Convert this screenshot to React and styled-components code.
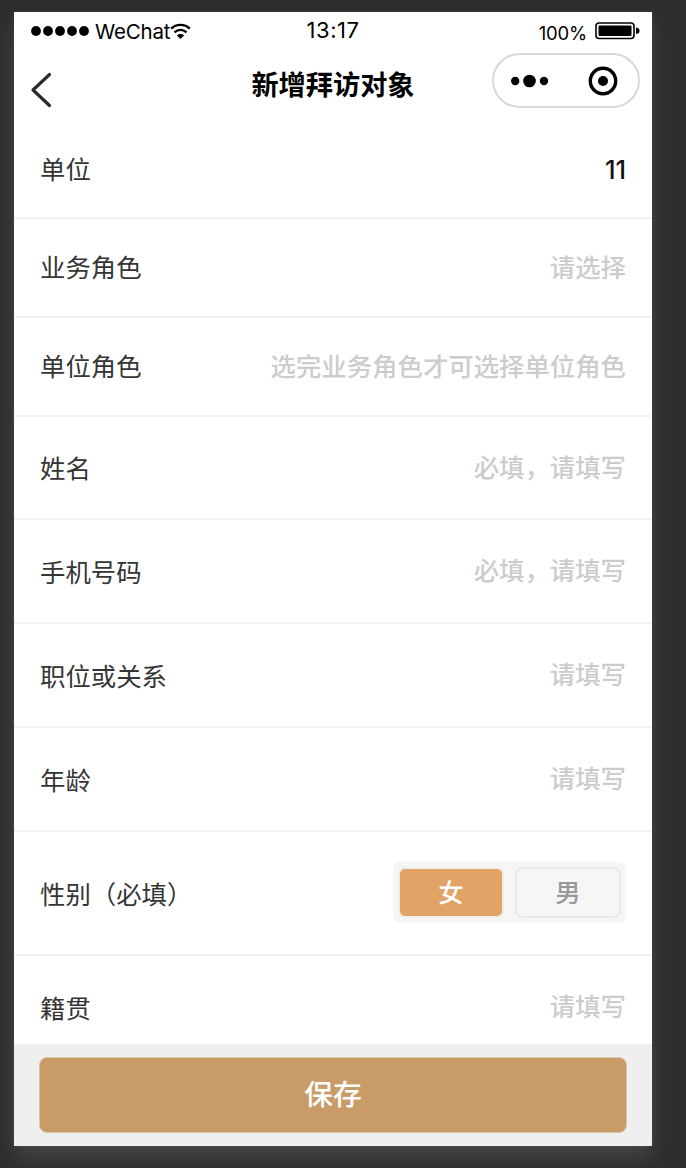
import React, { useState } from "react";
import styled, { createGlobalStyle } from "styled-components";

const GlobalStyle = createGlobalStyle`
  * {
    box-sizing: border-box;
  }
  body {
    margin: 0;
    background: #2e2e2e;
    font-family: "Noto Sans CJK SC", sans-serif;
  }
`;

const Page = styled.div`
  height: 1168px;
  padding: 12px 34px 22px 14px;
  overflow: hidden;
`;

const Phone = styled.div`
  display: flex;
  flex-direction: column;
  height: 1134px;
  background: #fff;
  box-shadow: 0 0 1px #666, 0 12px 20px -2px rgba(255, 255, 255, 0.13);
`;

const StatusBar = styled.div`
  display: grid;
  grid-template-columns: 1fr auto 1fr;
  align-items: center;
  height: 38px;
  padding: 0 12px 0 17px;
  font-family: Inter, "Liberation Sans", sans-serif;
  color: #000;
`;

const Carrier = styled.div`
  display: flex;
  align-items: center;
  font-size: 20.5px;
  letter-spacing: -0.2px;
`;

const Signal = styled.svg`
  margin-right: 5px;
`;

const Clock = styled.div`
  margin-right: 5px;
  padding-bottom: 2px;
  font-size: 22px;
  letter-spacing: 0.5px;
`;

const Battery = styled.div`
  display: flex;
  align-items: center;
  justify-content: flex-end;
  gap: 8px;
  font-size: 18.5px;
`;

const Percent = styled.span`
  padding-top: 3px;
  letter-spacing: -0.2px;
`;

const NavBar = styled.div`
  display: grid;
  grid-template-columns: 144px 1fr 148px;
  align-items: center;
  height: 70px;
  padding: 0 12px 0 16px;
`;

const BackButton = styled.button`
  justify-self: start;
  display: flex;
  padding: 10px 0 0;
  border: none;
  background: none;
`;

const Title = styled.h1`
  margin: 0;
  padding: 0 0 5px 0;
  font-size: 27.2px;
  font-weight: 700;
  line-height: 40px;
  text-align: center;
`;

const Capsule = styled.div`
  display: flex;
  align-items: center;
  justify-content: space-between;
  width: 148px;
  height: 55px;
  margin-top: -10px;
  padding: 1px 20px 0 17px;
  border: 2px solid #d8d8d8;
  border-radius: 28px;
`;

const Form = styled.div`
  flex: 1;
  min-height: 0;
  overflow: hidden;
`;

const Row = styled.div`
  display: flex;
  align-items: center;
  justify-content: space-between;
  height: ${(props) => props.$height}px;
  padding: 0 26px 4px;
  border-bottom: 2px solid #f2f2f2;
`;

const Label = styled.label`
  padding-top: ${(props) => props.$drop || 0}px;
  font-size: 25.4px;
  line-height: 36px;
  color: #353535;
`;

const Value = styled.span`
  padding-top: ${(props) => (props.$filled ? 6 : 0)}px;
  font-size: 25.4px;
  font-weight: 500;
  line-height: 36px;
  color: ${(props) => (props.$filled ? "#111" : "#ccc")};
  font-family: ${(props) => (props.$filled ? "Inter, " : "")} "Noto Sans CJK SC", sans-serif;
`;

const Segment = styled.div`
  display: flex;
  justify-content: space-between;
  width: 233px;
  height: 61px;
  margin-top: 2px;
  padding: 5px;
  border-radius: 6px;
  background: #f6f6f6;
`;

const SegmentButton = styled.button`
  width: 106px;
  height: 51px;
  padding: 0 0 2px;
  border: 2px solid ${(props) => (props.$active ? "#f0ece8" : "#e9e9e9")};
  border-radius: 7px;
  background: ${(props) => (props.$active ? "#e1a466" : "#f6f6f6")};
  color: ${(props) => (props.$active ? "#fff" : "#999")};
  font-family: inherit;
  font-size: 25.4px;
  font-weight: 500;
  line-height: 36px;
`;

const Footer = styled.div`
  height: 102px;
  padding: 13px 25px;
  background: #efefef;
`;

const SaveButton = styled.button`
  width: 100%;
  height: 76px;
  padding: 0 0 5px;
  border: 1px solid #dcc4a7;
  border-radius: 8px;
  background: #c99b66;
  color: #fff;
  font-family: inherit;
  font-size: 28.8px;
  font-weight: 500;
`;

const rows = [
  { label: "单位", value: "11", height: 99, drop: 2 },
  { label: "业务角色", placeholder: "请选择", height: 99 },
  { label: "单位角色", placeholder: "选完业务角色才可选择单位角色", height: 99 },
  { label: "姓名", placeholder: "必填，请填写", height: 103, drop: 3 },
  { label: "手机号码", placeholder: "必填，请填写", height: 104, drop: 3 },
  { label: "职位或关系", placeholder: "请填写", height: 104, drop: 3 },
  { label: "年龄", placeholder: "请填写", height: 104, drop: 3 },
  { label: "性别（必填）", gender: true, height: 124, drop: 3 },
  { label: "籍贯", placeholder: "请填写", height: 104, drop: 3 },
];

const GenderPicker = () => {
  const [gender, setGender] = useState("女");

  return (
    <Segment>
      {["女", "男"].map((item) => (
        <SegmentButton
          key={item}
          $active={gender === item}
          onClick={() => setGender(item)}
        >
          {item}
        </SegmentButton>
      ))}
    </Segment>
  );
};

const App = () => (
  <Page>
    <GlobalStyle />
    <Phone>
      <StatusBar>
        <Carrier>
          <Signal width="59" height="10" viewBox="0 0 59 10">
            {[5, 17, 29, 41, 53].map((cx) => (
              <circle key={cx} cx={cx} cy="5" r="4.9" />
            ))}
          </Signal>
          WeChat
          <svg width="21" height="17" viewBox="0 0 21 17" fill="none" stroke="#000">
            <path d="M1.2 5.6C6.4 .6 14.6 .6 19.8 5.6" strokeWidth="2.3" />
            <path d="M4.5 9.3C8 6 13 6 16.5 9.3" strokeWidth="2.3" />
            <path d="M6.9 12.4C8.9 10.6 12.1 10.6 14.1 12.4L10.5 16Z" fill="#000" stroke="none" />
          </svg>
        </Carrier>
        <Clock>13:17</Clock>
        <Battery>
          <Percent>100%</Percent>
          <svg width="45" height="18" viewBox="0 0 45 18">
            <rect x="1" y="1" width="38" height="15.5" rx="3" fill="none" stroke="#000" strokeWidth="1.6" />
            <rect x="3.5" y="3.5" width="33" height="10.5" rx="1" />
            <path d="M41 5.5C43.8 6 44.5 7 44.5 8.8S43.8 11.6 41 12.1Z" />
          </svg>
        </Battery>
      </StatusBar>
      <NavBar>
        <BackButton aria-label="返回">
          <svg width="22" height="36" viewBox="0 0 22 36" fill="none" stroke="#2b2b2b" strokeWidth="3.2" strokeLinecap="round" strokeLinejoin="round">
            <path d="M19.5 2.5L3 18L19.5 33.5" />
          </svg>
        </BackButton>
        <Title>新增拜访对象</Title>
        <Capsule>
          <svg width="38" height="14" viewBox="0 0 38 14">
            <circle cx="4.2" cy="7" r="4.2" />
            <circle cx="18.5" cy="7" r="6.3" />
            <circle cx="33" cy="7" r="4.2" />
          </svg>
          <svg width="30" height="30" viewBox="0 0 30 30">
            <circle cx="15" cy="15" r="12.7" fill="none" stroke="#000" strokeWidth="3.4" />
            <circle cx="15" cy="15" r="5" />
          </svg>
        </Capsule>
      </NavBar>
      <Form>
        {rows.map((row) => (
          <Row key={row.label} $height={row.height}>
            <Label $drop={row.drop}>{row.label}</Label>
            {row.gender ? (
              <GenderPicker />
            ) : (
              <Value $filled={!!row.value}>{row.value || row.placeholder}</Value>
            )}
          </Row>
        ))}
      </Form>
      <Footer>
        <SaveButton>保存</SaveButton>
      </Footer>
    </Phone>
  </Page>
);

export default App;
